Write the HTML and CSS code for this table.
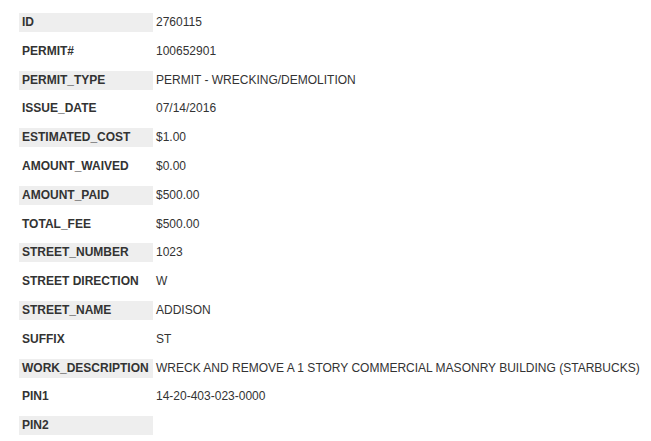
FILE: index.html
```html
<!DOCTYPE html>
<html>
<head>
<meta charset="utf-8">
<link rel="stylesheet" href="styles.css">
</head>
<body>
<div class="record">
  <div class="label shade">ID</div><div class="value">2760115</div>
  <div class="label">PERMIT#</div><div class="value">100652901</div>
  <div class="label shade">PERMIT_TYPE</div><div class="value">PERMIT - WRECKING/DEMOLITION</div>
  <div class="label">ISSUE_DATE</div><div class="value">07/14/2016</div>
  <div class="label shade">ESTIMATED_COST</div><div class="value">$1.00</div>
  <div class="label">AMOUNT_WAIVED</div><div class="value">$0.00</div>
  <div class="label shade">AMOUNT_PAID</div><div class="value">$500.00</div>
  <div class="label">TOTAL_FEE</div><div class="value">$500.00</div>
  <div class="label shade">STREET_NUMBER</div><div class="value">1023</div>
  <div class="label">STREET DIRECTION</div><div class="value">W</div>
  <div class="label shade">STREET_NAME</div><div class="value">ADDISON</div>
  <div class="label">SUFFIX</div><div class="value">ST</div>
  <div class="label shade">WORK_DESCRIPTION</div><div class="value">WRECK AND REMOVE A 1 STORY COMMERCIAL MASONRY BUILDING (STARBUCKS)</div>
  <div class="label">PIN1</div><div class="value">14-20-403-023-0000</div>
  <div class="label shade">PIN2</div><div class="value"></div>
</div>
</body>
</html>
```
FILE: styles.css
```css
html, body {
  margin: 0;
  padding: 0;
  background: #fff;
}
body {
  font-family: "Liberation Sans", Arial, sans-serif;
  font-size: 12px;
  color: #333;
}
.record {
  display: grid;
  grid-template-columns: 134px auto;
  grid-auto-rows: 19px;
  row-gap: 9.8px;
  padding: 13px 0 0 19px;
}
.label {
  font-weight: bold;
  line-height: 19px;
  padding-left: 3px;
  white-space: nowrap;
}
.shade {
  background: #eeeeee;
}
.value {
  line-height: 19px;
  padding-left: 3px;
  white-space: nowrap;
}
```
